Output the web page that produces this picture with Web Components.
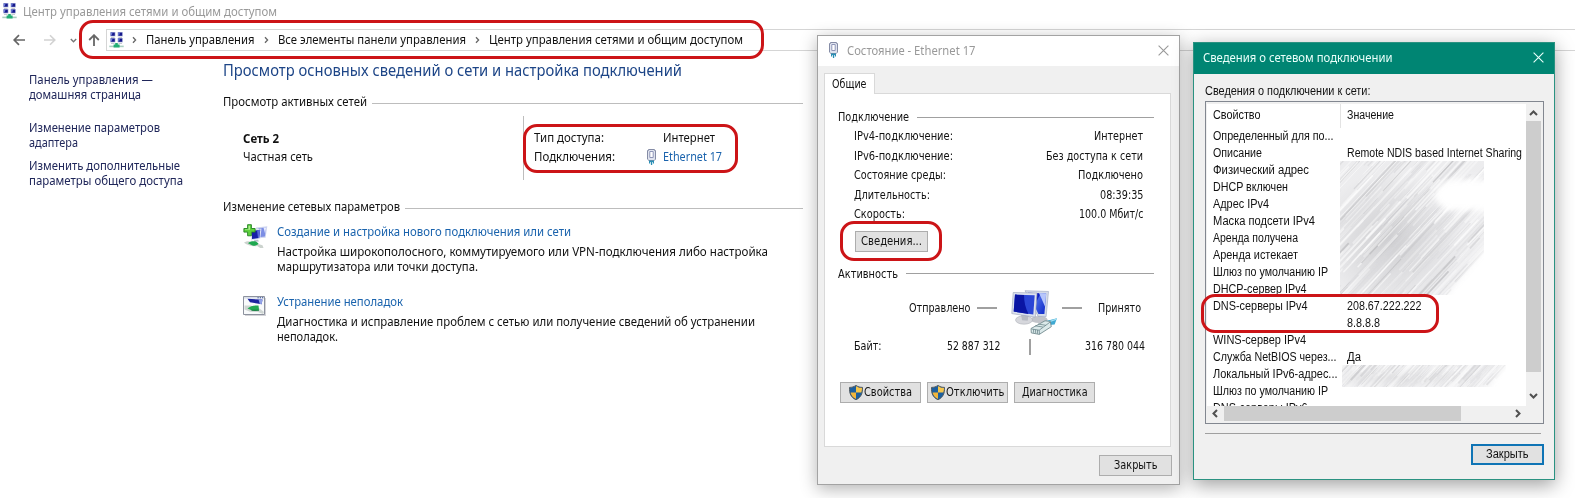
<!DOCTYPE html>
<html lang="ru">
<head>
<meta charset="utf-8">
<title>Центр управления сетями и общим доступом</title>
<style>
    html, body {
        margin: 0;
        height: 100%;
        overflow: hidden;
        background: #fff;
    }

    body {
        font-family: "Noto Sans", "Open Sans", sans-serif;
        font-size: 12px;
        line-height: 15px;
        color: #111;
    }
</style>
</head>
<body>
<network-desktop></network-desktop>

<script>
/** Creates the open shadow root of an element and fills it. */
function mount(el, css, html) {
    el.attachShadow({ mode: "open" }).innerHTML = `<style>* { box-sizing: border-box; } ${css}</style>${html}`;
}

/**
 * TextLine Component
 * One line of text, condensed or stretched to the width in "w".
 */
class TextLine extends HTMLElement {
    connectedCallback() {
        if (this.shadowRoot) return;
        mount(this, `
            :host { display: block; flex: none; white-space: nowrap; }
            span { display: inline-block; transform-origin: 0 50%; vertical-align: top; }
        `, `<span><slot></slot></span>`);
        const width = Number(this.getAttribute("w"));
        if (!width) return;
        const span = this.shadowRoot.querySelector("span");
        const natural = span.getBoundingClientRect().width;
        this.style.width = `${width}px`;
        if (natural) span.style.transform = `scaleX(${width / natural})`;
    }
}

const pc = (x, y) => `
    <path d="M${x} ${y}h5.6v4.4h-5.6z" fill="#c4cbe6"/>
    <path d="M${x + .8} ${y + .5}h4v3.3h-4z" fill="#16188c"/>
    <path d="M${x + .8} ${y + .5}h1.8l-1 3h-.8z" fill="#6f7fd8"/>
    <path d="M${x + 1} ${y + 4.8}h3.6v1h-3.6z" fill="#b9bdc6"/>`;

const ICONS = {
    network: {
        box: "0 0 15 17",
        art: `${pc(1, 0)}${pc(8.4, 0)}${pc(1, 6)}${pc(8.4, 6)}
            <path d="M.3 13.600h14.400v1.600H.3z" fill="#a9cfc0"/>
            <path d="M6.200 11h2.600v1.600h1.800v2.900H4.600v-2.900h1.600z" fill="#22ad74"/>`,
    },
    back: { box: "0 0 13 12", art: `<path d="M6 1.2 1.2 6 6 10.8M1.4 6H12" fill="none" stroke="#666" stroke-width="1.7"/>` },
    forward: { box: "0 0 13 12", art: `<path d="m7 1.2 4.8 4.8L7 10.8M11.6 6H1" fill="none" stroke="#d2d2d2" stroke-width="1.6"/>` },
    up: { box: "0 0 12 13", art: `<path d="M1.2 6 6 1.2 10.8 6M6 1.4V12" fill="none" stroke="#666" stroke-width="1.8"/>` },
    recent: { box: "0 0 7 5", art: `<path d="m.8 1 2.7 2.7L6.2 1" fill="none" stroke="#777" stroke-width="1.4"/>` },
    crumb: { box: "0 0 5 8", art: `<path d="m1 1.200 2.600 2.800L1 6.800" fill="none" stroke="#666" stroke-width="1.3"/>` },
    chevronUp: { box: "0 0 9 6", art: `<path d="M1 5 4.5 1.5 8 5" fill="none" stroke="#505050" stroke-width="2"/>` },
    chevronDown: { box: "0 0 9 6", art: `<path d="M1 1l3.5 3.5L8 1" fill="none" stroke="#505050" stroke-width="2"/>` },
    chevronLeft: { box: "0 0 6 9", art: `<path d="M5 1 1.5 4.5 5 8" fill="none" stroke="#505050" stroke-width="2"/>` },
    chevronRight: { box: "0 0 6 9", art: `<path d="M1 1l3.5 3.5L1 8" fill="none" stroke="#505050" stroke-width="2"/>` },
    close: { box: "0 0 11 11", art: `<path d="m.6.6 9.8 9.8M10.4.6.6 10.4" fill="none" stroke="currentColor" stroke-width="1.1"/>` },
    plug: {
        box: "0 0 9 16",
        art: `<path d="M1.500.5h6v1h1v8.700l-1.300 1.300H1.900L.5 10.200V1.500h1z" fill="#dfe3ee" stroke="#858ca6"/>
            <path d="M2.800 2.500h3.400v6H2.800z" fill="#fff" stroke="#8f96b8"/>
            <path d="M2 11.500h5v1.500H2zM2 13h1.200v1.500H2zM3.900 13h1.300v3H3.900zM5.900 13H7v1.500H5.900z" fill="#2a8fb4"/>`,
    },
    newConnection: {
        box: "0 0 25 25",
        art: `<path d="m13 3.5 11.3-1.2-1.7 11.5-9 .5z" fill="#cfd5ee"/>
            <path d="m15.5 4.2 7.6-.8-1.2 9.2-6.4.7z" fill="#7c8ee4"/><path d="m20.5 3.6 2.6-.2-1 6z" fill="#e9edff"/>
            <path d="m8 6 10.5-1.5L17.2 15 8 16.4z" fill="#dfe4f5"/><path d="m9 7 8.2-1.3-1 8.3L9 15z" fill="#171fa8"/>
            <path d="m14 6.2 3.2-.5-1 8.3-1.2.1z" fill="#5767d9"/>
            <path d="M11 16.2l4-.4 1 1.7-5 .3z" fill="#b9bfce"/>
            <path d="M1 18.8c3-2 5-1.8 8-.8l10.5 3.3 1 2.6-3.3.2-3-2.2c-4 .8-9 .1-13.2-3.1z" fill="#ccd3ce"/>
            <path d="M5 19.3c2-1.9 5-2.3 8-1.7l2.5 2c-1 1.8-3.6 2.6-6 1.9z" fill="#20a850"/>
            <path d="M4.6.7h3.8v3.8h3.7v3.6H8.4v3.7H4.6V8.1H.9V4.5h3.7z" fill="#5fd03f" stroke="#228221" stroke-width=".9"/>
            <path d="M5.6 1.7h1.3v4H2v-.4h3.6z" fill="#b7f29a"/>`,
    },
    troubleshoot: {
        box: "0 0 23 20",
        art: `<path d="M2 2h21v18H2z" fill="#d4d4d8"/><path d="M.5.5h21v18H.5z" fill="#f8fafb" stroke="#8d929e"/>
            <path d="M1 1h20v1.6H1z" fill="#dbe0ea"/><path d="M14.5 1.2h1.2v1h-1.2zM16.8 1.2H18v1h-1.2zM19 1.2h1.2v1H19z" fill="#334a91"/>
            <path d="M4.500 2.800 19.500 3.600l-.8 4.600L7 6.200z" fill="#1c249f"/><path d="m15.500 3.300 4 .3-.8 4.600-2-.4z" fill="#93a3e7"/>
            <path d="M1.500 9.500h6l9 3 4.500 3.500-1 2-5-2-8-.2-5.500-2.300z" fill="#cfd6d3"/>
            <path d="M4.500 12.400c3-2.400 6-3.300 11-2.800l.5 4.200c-3 1.200-6 1-8.500 0z" fill="#22a952"/>
            <path d="M7.500 13.800h8.500v1H9z" fill="#0e7a3a"/>`,
    },
    computers: {
        box: "0 0 46 45",
        art: `<defs><linearGradient id="s" x2="1" y2=".6"><stop stop-color="#0613a5"/><stop offset=".5" stop-color="#0b1cc4"/><stop offset=".55" stop-color="#4263e2"/><stop offset="1" stop-color="#1a35cf"/></linearGradient></defs>
            <ellipse cx="28" cy="29.5" rx="8.5" ry="3.6" fill="#c2c4ca"/>
            <path d="m14 .7 23.5.8-2.4 25.2-8-.3z" fill="#d5dbe9" stroke="#9aa4bd" stroke-width=".6"/>
            <path d="m17 2.7 18.2.7-1.8 20.7-6-.2z" fill="url(#s)"/><path d="m28 3.1 7.2.3-1.2 13z" fill="#b7c6fb"/>
            <ellipse cx="13" cy="30" rx="8.5" ry="4.2" fill="#d6d7dc" stroke="#a5a8b0" stroke-width=".5"/>
            <path d="m10 24 7.5.8-.8 6-5.7-.5z" fill="#b7bac2"/>
            <path d="m2.2 2.5 23.8.6-1.7 24L.8 23.6z" fill="#dce1ee" stroke="#98a1b9" stroke-width=".6"/>
            <path d="m4 4.6 19.7.6-1.4 19.4-19.6-3z" fill="#2b46d6"/><path d="m4 4.6 9 .3c0 7 1.500 13 4.500 19L2.700 21.600z" fill="#0a15a4"/>
            <path d="m35 31 11-2.7-2.4 6.3-5.8.4z" fill="#3fa9d2"/><path d="m36 32.5 9.5-3.4" stroke="#a4e1f4" stroke-width="1.2"/>
            <path d="m20 38.5 14-7.7 5.3.6 1 5.3-12 7.7-8-1.5z" fill="#dbe9ea" stroke="#667f84" stroke-width=".8"/>
            <path d="m20.5 39 7.7 1.2 11-8.2m-11 8.2.3 4M22.5 39.3l.2 3.5M24.5 39.7l.2 3.5M26.5 40l.1 3.8m-2.4-8 7.6 1.2m-4.8-3 7.8 1.3" fill="none" stroke="#6b868b" stroke-width=".8"/>`,
    },
    shield: {
        box: "0 0 14 15",
        art: `<path d="M7 .4c2 1.4 4.2 2 6.5 2C13.8 8.500 12 12.500 7 14.700 2 12.500.2 8.500.5 2.400 2.800 2.400 5 1.800 7 .4z" fill="#1c5f9f"/>
            <path d="M7 .9c1.900 1.300 3.900 1.900 6 1.900 0 1.700-.1 3.200-.5 4.700H7z" fill="#f6c64b"/>
            <path d="M1.500 7.500H7v6.600c-3-1.400-4.800-3.600-5.500-6.600z" fill="#f2b63b"/>
            <path d="M7 .4c2 1.400 4.200 2 6.500 2C13.800 8.500 12 12.500 7 14.700 2 12.500.2 8.500.5 2.400 2.800 2.400 5 1.800 7 .4z" fill="none" stroke="#4d5357" stroke-width=".9"/>`,
    },
};

/** Inline SVG icon, sized by its own view box. */
class UiIcon extends HTMLElement {
    connectedCallback() {
        if (this.shadowRoot) return;
        const { box, art } = ICONS[this.getAttribute("name")];
        const [, , w, h] = box.split(" ");
        mount(this, `
            :host { display: block; flex: none; }
            svg { display: block; }
        `, `<svg width="${w}" height="${h}" viewBox="${box}">${art}</svg>`);
    }
}

/** Group caption followed by a horizontal rule. */
class SectionTitle extends HTMLElement {
    connectedCallback() {
        if (this.shadowRoot) return;
        mount(this, `
            :host { display: flex; align-items: center; gap: var(--rule-gap, 5px); }
            i { flex: 1; height: 1px; margin-top: var(--rule-shift, 3px); background: var(--rule, #bdbdbd); }
        `, `<slot></slot><i></i>`);
    }
}

/** Classic push button; add "primary" for the focused one. */
class PushButton extends HTMLElement {
    connectedCallback() {
        if (this.shadowRoot) return;
        mount(this, `
            :host {
                display: flex;
                flex: none;
                align-items: center;
                justify-content: center;
                gap: 1px;
                box-sizing: border-box;
                width: var(--button-width, 73px);
                height: 21px;
                background: #e1e1e1;
                border: 1px solid #adadad;
            }
            :host([primary]) { border: 2px solid #0f74b5; height: 21px; }
        `, `<slot></slot>`);
    }
}

/** Rounded marker drawn over the windows. */
class RedMark extends HTMLElement {
    connectedCallback() {
        if (this.shadowRoot) return;
        const [x, y, w, h] = this.getAttribute("box").split(" ");
        mount(this, `
            :host {
                position: absolute;
                left: ${x}px;
                top: ${y}px;
                width: ${w}px;
                height: ${h}px;
                box-sizing: border-box;
                border: 3px solid #cc1417;
                border-radius: 14px;
                z-index: 5;
                pointer-events: none;
            }
        `, "");
    }
}

/** Grey diagonal strokes that hide private values. */
class ScribbleArea extends HTMLElement {
    connectedCallback() {
        if (this.shadowRoot) return;
        const w = Number(this.getAttribute("w"));
        const h = Number(this.getAttribute("h"));
        const tone = Number(this.getAttribute("tone"));
        const shape = this.getAttribute("shape");
        let seed = 17;
        const random = () => (seed = (seed * 16807) % 2147483647) / 2147483647;
        let strokes = "";
        for (let i = 0; i < (w + h) * 1.6; i++) {
            const x = random() * (w + h) - h;
            const y = random() * h * 1.4;
            const len = 35 + random() * 80;
            const color = random() < 0.5 ? "#fff" : random() < 0.3 ? "#b4b4b7" : "#d9d9dc";
            strokes += `<path d="M${x.toFixed(1)} ${y.toFixed(1)}l${(len * 0.68).toFixed(1)} ${(-len * 0.73).toFixed(1)}"
                stroke="${color}" stroke-width="${(0.6 + random() * 1.6).toFixed(1)}" opacity="${(tone * (0.2 + random() * 0.5)).toFixed(2)}"/>`;
        }
        mount(this, `
            :host { display: block; }
            svg { display: block; overflow: hidden; }
        `, `<svg width="${w}" height="${h}" viewBox="0 0 ${w} ${h}">
                <defs>
                    <filter id="soft" x="-10%" y="-10%" width="120%" height="120%"><feGaussianBlur stdDeviation="3"/></filter>
                    <filter id="smear" x="0" y="0" width="100%" height="100%"><feGaussianBlur stdDeviation=".45"/></filter>
                    <radialGradient id="shade" cx=".35" cy=".58" r=".5"><stop stop-color="#c9c9cc"/><stop offset="1" stop-color="#ebebed"/></radialGradient>
                    <mask id="edge"><path d="${shape}" fill="#fff" filter="url(#soft)"/></mask>
                </defs>
                <g mask="url(#edge)"><path d="M0 0h${w}v${h}H0z" fill="url(#shade)" opacity="${tone}"/><g filter="url(#smear)">${strokes}</g></g>
            </svg>`);
    }
}

/** Toolbar with navigation arrows and the breadcrumb path. */
class AddressBar extends HTMLElement {
    connectedCallback() {
        if (this.shadowRoot) return;
        mount(this, `
            :host { display: flex; align-items: center; height: 22px; margin-top: 5px; padding-left: 13px; }
            .arrows { display: flex; align-items: center; width: 93px; }
            .arrows ui-icon:nth-child(2) { margin-left: 17px; }
            .arrows ui-icon:nth-child(3) { margin-left: 14px; }
            .arrows ui-icon:nth-child(4) { margin-left: 11px; }
            .path {
                display: flex;
                flex: 1;
                align-items: center;
                height: 22px;
                padding-left: 2px;
                border: 1px solid #d5d5d5;
                border-right: 0;
            }
            .path text-line { margin-top: -1px; }
            .path ui-icon[name="crumb"] { margin: 0 9px; }
            .path ui-icon[name="crumb"].first { margin: 0 9px 0 8px; }
        `, `
            <div class="arrows">
                <ui-icon name="back"></ui-icon><ui-icon name="forward"></ui-icon>
                <ui-icon name="recent"></ui-icon><ui-icon name="up"></ui-icon>
            </div>
            <div class="path">
                <ui-icon name="network"></ui-icon>
                <ui-icon class="first" name="crumb"></ui-icon><text-line w="108.500">Панель управления</text-line>
                <ui-icon name="crumb"></ui-icon><text-line w="188">Все элементы панели управления</text-line>
                <ui-icon name="crumb"></ui-icon><text-line w="254">Центр управления сетями и общим доступом</text-line>
            </div>
        `);
    }
}

/** Icon, link and description of one network task. */
class TaskItem extends HTMLElement {
    connectedCallback() {
        if (this.shadowRoot) return;
        mount(this, `
            :host { display: flex; height: 50px; }
            .icon { width: 34px; flex: none; }
            .link { color: #1a63ad; height: 20px; }
        `, `
            <div class="icon"><slot name="icon"></slot></div>
            <div><div class="link"><slot name="link"></slot></div><slot></slot></div>
        `);
    }
}

/** Main window: network and sharing center. */
class SharingCenter extends HTMLElement {
    connectedCallback() {
        if (this.shadowRoot) return;
        mount(this, `
            :host { display: block; }
            .title { display: flex; height: 24px; padding: 3px 0 0 2px; gap: 6px; color: #999; }
            .title text-line { margin-top: 1px; }
            .page { display: flex; padding-top: 1px; }
            nav { width: 223px; flex: none; padding: 20px 0 0 29px; color: #20275a; }
            nav div { margin-bottom: 8px; }
            nav div:first-child { margin-bottom: 18px; }
            main { width: 580px; padding-top: 7px; }
            .heading { font-size: 16px; line-height: 22px; color: #1d4587; margin-bottom: 13px; }
            .net { display: flex; height: 64px; margin: 7px 0 19px; }
            .name { width: 301px; padding: 15px 0 0 20px; border-right: 1px solid #bdbdbd; }
            .name text-line { height: 18px; }
            .facts {
                display: grid;
                grid-template-columns: 113px 16px 1fr;
                grid-auto-rows: 19px;
                padding: 14px 0 0 10px;
            }
            .facts text-line:nth-of-type(2) { grid-column: 3; }
            a { color: #1a63ad; }
            .tasks { display: flex; flex-direction: column; gap: 20px; padding: 10px 0 0 20px; }
        `, `
            <div class="title"><ui-icon name="network"></ui-icon><text-line w="254">Центр управления сетями и общим доступом</text-line></div>
            <address-bar></address-bar>
            <div class="page">
                <nav>
                    <div><text-line w="124">Панель управления —</text-line><text-line w="112">домашняя страница</text-line></div>
                    <div><text-line w="131">Изменение параметров</text-line><text-line w="49">адаптера</text-line></div>
                    <div><text-line w="151">Изменить дополнительные</text-line><text-line w="154">параметры общего доступа</text-line></div>
                </nav>
                <main>
                    <text-line class="heading" w="459">Просмотр основных сведений о сети и настройка подключений</text-line>
                    <section-title><text-line w="144">Просмотр активных сетей</text-line></section-title>
                    <div class="net">
                        <div class="name">
                            <text-line w="36"><b>Сеть 2</b></text-line>
                            <text-line w="70">Частная сеть</text-line>
                        </div>
                        <div class="facts">
                            <text-line w="70">Тип доступа:</text-line>
                            <text-line w="52">Интернет</text-line>
                            <text-line w="81">Подключения:</text-line>
                            <ui-icon name="plug"></ui-icon>
                            <text-line w="59"><a>Ethernet 17</a></text-line>
                        </div>
                    </div>
                    <section-title><text-line w="177">Изменение сетевых параметров</text-line></section-title>
                    <div class="tasks">
                        <task-item>
                            <ui-icon slot="icon" name="newConnection"></ui-icon>
                            <text-line slot="link" w="294">Создание и настройка нового подключения или сети</text-line>
                            <text-line w="491">Настройка широкополосного, коммутируемого или VPN-подключения либо настройка</text-line>
                            <text-line w="201">маршрутизатора или точки доступа.</text-line>
                        </task-item>
                        <task-item>
                            <ui-icon slot="icon" name="troubleshoot" style="padding-top:2px"></ui-icon>
                            <text-line slot="link" w="126">Устранение неполадок</text-line>
                            <text-line w="478">Диагностика и исправление проблем с сетью или получение сведений об устранении</text-line>
                            <text-line w="61">неполадок.</text-line>
                        </task-item>
                    </div>
                </main>
            </div>
        `);
    }
}

/** "Состояние" dialog of the connection. */
class StatusDialog extends HTMLElement {
    connectedCallback() {
        if (this.shadowRoot) return;
        const rows = [
            ["IPv4-подключение:", 99, "Интернет", 49],
            ["IPv6-подключение:", 99, "Без доступа к сети", 97],
            ["Состояние среды:", 92, "Подключено", 65],
            ["Длительность:", 76, "08:39:35", 43.5],
            ["Скорость:", 51, "100.0 Мбит/с", 64.5],
        ];
        mount(this, `
            :host {
                display: flex;
                flex-direction: column;
                box-sizing: border-box;
                width: 363px;
                height: 450px;
                background: #f0f0f0;
                border: 1px solid #a3a3a3;
                box-shadow: 0 4px 16px rgba(0, 0, 0, .3);
                font: 11.5px/15px "DejaVu Sans Condensed", "DejaVu Sans", sans-serif;
            }
            header {
                display: flex;
                align-items: center;
                height: 30px;
                padding: 0 10px 2px 11px;
                background: #fff;
                color: #999;
                font: 12px/15px "Noto Sans", sans-serif;
            }
            header text-line { margin: 0 auto 0 9px; }
            .tab {
                width: 51px;
                height: 21px;
                margin: 7px 0 -1px 6px;
                padding: 3px 0 0 7px;
                background: #fff;
                border: 1px solid #d9d9d9;
                border-bottom: 0;
                z-index: 1;
            }
            .panel {
                height: 354px;
                margin: 0 8px 0 6px;
                padding: 16px 16px 0 13px;
                background: #fff;
                border: 1px solid #d9d9d9;
                --rule: #a0a0a0;
                --rule-gap: 8px;
                --rule-shift: -1px;
            }
            .rows { padding: 4px 11px 0 15.500px; }
            .row { display: flex; justify-content: space-between; height: 19.500px; }
            .details { margin: 4px 0 15px 17px; }
            .traffic { display: flex; height: 45px; margin: 8px 0 4px 71px; }
            .traffic text-line { margin-top: 11px; }
            .traffic i { width: 20px; height: 2px; margin: 17px 0 0 6px; background: #a0a0a0; }
            .traffic ui-icon { margin-left: 14px; }
            .traffic i.in { margin: 17px 16px 0 5px; }
            .bytes { display: flex; padding-left: 15.500px; }
            .bytes i { width: 2px; height: 16px; margin: 0 54px 0 28px; background: #a0a0a0; }
            .actions { display: flex; gap: 6px; margin: 27px 0 0 2px; --button-width: 81px; }
            footer { display: flex; justify-content: flex-end; padding: 8px 7px 0; }
        `, `
            <header><ui-icon name="plug"></ui-icon><text-line w="128.500">Состояние - Ethernet 17</text-line><ui-icon name="close"></ui-icon></header>
            <div class="tab"><text-line w="34.500">Общие</text-line></div>
            <div class="panel">
                <section-title><text-line w="71">Подключение</text-line></section-title>
                <div class="rows">
                    ${rows.map(([name, nw, value, vw]) => `<div class="row"><text-line w="${nw}">${name}</text-line><text-line w="${vw}">${value}</text-line></div>`).join("")}
                </div>
                <push-button class="details"><text-line w="61">Сведения...</text-line></push-button>
                <section-title><text-line w="60">Активность</text-line></section-title>
                <div class="traffic">
                    <text-line w="61.500">Отправлено</text-line><i></i>
                    <ui-icon name="computers"></ui-icon>
                    <i class="in"></i><text-line w="43">Принято</text-line>
                </div>
                <div class="bytes">
                    <text-line w="27.500">Байт:</text-line>
                    <text-line w="53.500" style="margin-left:66px">52 887 312</text-line><i></i>
                    <text-line w="60">316 780 044</text-line>
                </div>
                <div class="actions">
                    <push-button><ui-icon name="shield"></ui-icon><text-line w="48">Свойства</text-line></push-button>
                    <push-button><ui-icon name="shield"></ui-icon><text-line w="58.500">Отключить</text-line></push-button>
                    <push-button><text-line w="65.500">Диагностика</text-line></push-button>
                </div>
            </div>
            <footer><push-button><text-line w="43.500">Закрыть</text-line></push-button></footer>
        `);
    }
}

/** "Сведения о сетевом подключении" dialog with the property list. */
class DetailsDialog extends HTMLElement {
    connectedCallback() {
        if (this.shadowRoot) return;
        const rows = [
            ["Определенный для по...", 120.5],
            ["Описание", 49, "Remote NDIS based Internet Sharing", 175],
            ["Физический адрес", 96],
            ["DHCP включен", 75],
            ["Адрес IPv4", 56],
            ["Маска подсети IPv4", 102],
            ["Аренда получена", 85],
            ["Аренда истекает", 85],
            ["Шлюз по умолчанию IP", 115],
            ["DHCP-сервер IPv4", 93.5],
            ["DNS-серверы IPv4", 94.5, "208.67.222.222", 74.5],
            ["", 0, "8.8.8.8", 33],
            ["WINS-сервер IPv4", 93],
            ["Служба NetBIOS через...", 123.5, "Да", 14],
            ["Локальный IPv6-адрес...", 124.5],
            ["Шлюз по умолчанию IP", 115],
            ["DNS-серверы IPv6", 94.5],
        ];
        mount(this, `
            :host {
                display: flex;
                flex-direction: column;
                box-sizing: border-box;
                width: 362px;
                height: 438px;
                background: #f0f0f0;
                border: 1px solid #2a9281;
                box-shadow: 0 5px 18px rgba(0, 0, 0, .38);
                font: 12px/17px "Liberation Sans", Arial, sans-serif;
            }
            header {
                display: flex;
                align-items: center;
                height: 31px;
                padding: 0 10px 2px 9px;
                background: #008573;
                color: #e9fffa;
                font: 12px/15px "Noto Sans", sans-serif;
            }
            header text-line { margin-right: auto; }
            .body { padding: 9px 10px 0 11px; }
            .list {
                display: grid;
                grid-template: 302px 15px / 319px 15px;
                width: 339px;
                height: 323px;
                margin-top: 1px;
                padding: 2px 1px;
                background: #f0f0f0;
                border: 1px solid #828790;
            }
            .view { position: relative; background: #fff; overflow: hidden; padding-left: 6px; }
            .row { display: grid; grid-template-columns: 134px 1fr; height: 17px; }
            .head { height: 24px; padding-top: 3px; background: linear-gradient(#e3e3e3, #e3e3e3) 127px 0 / 1px 24px no-repeat; }
            scribble-area { position: absolute; left: 133px; top: 57px; }
            scribble-area.low { left: 135px; top: 261px; }
            .vbar, .hbar { display: flex; }
            .vbar { flex-direction: column; align-items: center; height: 302px; padding: 6px 0 7px; }
            .vbar i { width: 15px; height: 251px; margin: 5px 0 auto; background: #cdcdcd; }
            .hbar { align-items: center; padding: 0 5px; }
            .hbar i { width: 237px; height: 15px; margin: 0 auto 0 6px; background: #cdcdcd; }
            hr { height: 1px; margin: 9px 3px 10px 0; border: 0; background: #a0a0a0; }
            footer { display: flex; justify-content: flex-end; }
        `, `
            <header><text-line w="189.500">Сведения о сетевом подключении</text-line><ui-icon name="close"></ui-icon></header>
            <div class="body">
                <text-line w="165.500">Сведения о подключении к сети:</text-line>
                <div class="list">
                    <div class="view">
                        <div class="row head"><text-line w="47.500">Свойство</text-line><text-line w="47">Значение</text-line></div>
                        ${rows.map(([name, nw, value = "", vw = 0]) => `<div class="row"><text-line w="${nw}">${name}</text-line><text-line w="${vw}">${value}</text-line></div>`).join("")}
                        <scribble-area w="144" h="134" tone="0.9" shape="M-10-10h170v28H115q-18 2-21 16 4 16 22 16h40v22L92 150H-10z"></scribble-area>
                        <scribble-area class="low" w="164" h="22" tone="0.6" shape="M-10-10h178L140 32H-10z"></scribble-area>
                    </div>
                    <div class="vbar"><ui-icon name="chevronUp"></ui-icon><i></i><ui-icon name="chevronDown"></ui-icon></div>
                    <div class="hbar"><ui-icon name="chevronLeft"></ui-icon><i></i><ui-icon name="chevronRight"></ui-icon></div>
                </div>
                <hr>
                <footer><push-button primary><text-line w="42.500">Закрыть</text-line></push-button></footer>
            </div>
        `);
    }
}

/** Desktop: main window, two dialogs over it and the red markers. */
class NetworkDesktop extends HTMLElement {
    connectedCallback() {
        if (this.shadowRoot) return;
        mount(this, `
            :host { display: block; position: relative; width: 1575px; height: 498px; overflow: hidden; }
            status-dialog { position: absolute; left: 817px; top: 35px; }
            details-dialog { position: absolute; left: 1193px; top: 42px; }
        `, `
            <sharing-center></sharing-center>
            <status-dialog></status-dialog>
            <details-dialog></details-dialog>
            <red-mark box="79 20 685 39"></red-mark>
            <red-mark box="523 124 215 49"></red-mark>
            <red-mark box="840 221 102 40"></red-mark>
            <red-mark box="1201 294 238 39"></red-mark>
        `);
    }
}

customElements.define("network-desktop", NetworkDesktop);
customElements.define("sharing-center", SharingCenter);
customElements.define("address-bar", AddressBar);
customElements.define("task-item", TaskItem);
customElements.define("status-dialog", StatusDialog);
customElements.define("details-dialog", DetailsDialog);
customElements.define("section-title", SectionTitle);
customElements.define("push-button", PushButton);
customElements.define("red-mark", RedMark);
customElements.define("scribble-area", ScribbleArea);
customElements.define("ui-icon", UiIcon);
customElements.define("text-line", TextLine);
</script>
</body>
</html>
